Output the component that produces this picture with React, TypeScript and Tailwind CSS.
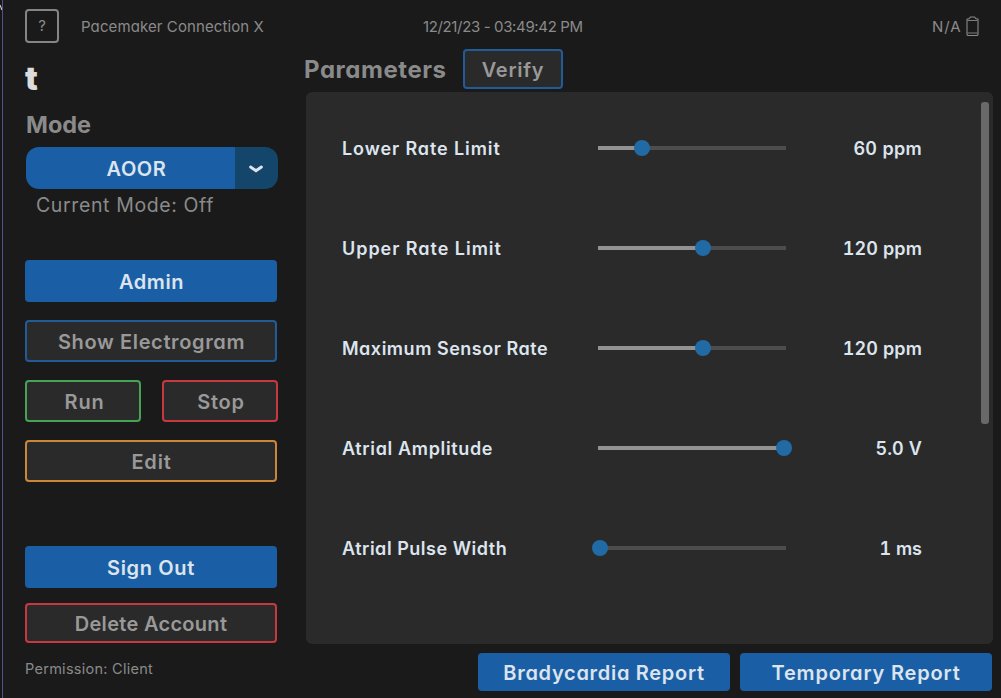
import type { ReactNode } from "react";

type ParameterRow = {
  label: string;
  value: string;
  fill: number;
  labelTracking: string;
  valueTracking: string;
};

const TRACK_WIDTH = 188;

const parameters: ParameterRow[] = [
  { label: "Lower Rate Limit", value: "60 ppm", fill: 44, labelTracking: "tracking-[0.9px]", valueTracking: "tracking-[0.3px]" },
  { label: "Upper Rate Limit", value: "120 ppm", fill: 105, labelTracking: "tracking-[0.97px]", valueTracking: "tracking-[0.1px]" },
  { label: "Maximum Sensor Rate", value: "120 ppm", fill: 105, labelTracking: "tracking-[0.52px]", valueTracking: "tracking-[0.1px]" },
  { label: "Atrial Amplitude", value: "5.0 V", fill: 186, labelTracking: "tracking-[0.65px]", valueTracking: "tracking-[0.1px]" },
  { label: "Atrial Pulse Width", value: "1 ms", fill: 2, labelTracking: "tracking-[0.52px]", valueTracking: "tracking-[0px]" },
];

const tones = {
  solid: "bg-[#1a5fa6] text-[#dce4ee]",
  blue: "border-2 border-[#215c98] bg-[#2a2a2a] text-[#999999]",
  green: "border-2 border-[#44a355] bg-[#2a2a2a] text-[#999999]",
  red: "border-2 border-[#c8393f] bg-[#2a2a2a] text-[#999999]",
  orange: "border-2 border-[#cb8637] bg-[#2a2a2a] text-[#999999]",
};

function Button({ tone, className, children }: { tone: keyof typeof tones; className: string; children: ReactNode }) {
  return (
    <button className={`flex shrink-0 items-center justify-center rounded-[4px] pt-[2px] text-[20px] font-semibold whitespace-nowrap ${tones[tone]} ${className}`}>
      {children}
    </button>
  );
}

function Slider({ fill }: { fill: number }) {
  return (
    <div className="relative h-1 w-[188px] shrink-0 bg-[#4b4d4e]">
      <div className="h-1 bg-[#929292]" style={{ width: fill }} />
      <div
        className="absolute top-1/2 size-4 -translate-x-1/2 -translate-y-1/2 rounded-full bg-[#206ba6]"
        style={{ left: Math.min(fill, TRACK_WIDTH) }}
      />
    </div>
  );
}

function BatteryIcon() {
  return (
    <svg width="13" height="21" viewBox="0 0 13 21" fill="none" stroke="#8a8a8a" className="shrink-0">
      <path d="M1 3.2 L3.2 2.6 L4.5 1 H8.5 L9.8 2.6 L12 3.2 V18.2 Q12 19.5 10.7 19.5 H2.3 Q1 19.5 1 18.2 Z" strokeWidth="1.1" />
      <path d="M1.5 4.5 H11.5 M1.5 17 H11.5" strokeWidth="0.9" />
    </svg>
  );
}

export default function App() {
  return (
    <div className="relative flex h-[698px] w-[1001px] overflow-hidden bg-[#1a1a1a] font-['Inter',sans-serif] text-[#8a8a8a] [font-feature-settings:'cv11']">
      <div className="h-full w-[3px] shrink-0 border-r border-[#55508a] bg-[#15161a]">
        <svg width="2" height="14" viewBox="0 0 2 14" className="block">
          <path d="M0 5 L2 10" stroke="#c8c8b8" strokeWidth="1.2" />
        </svg>
      </div>

      <div className="flex min-w-0 flex-1 flex-col">
        <header className="flex h-[49px] shrink-0 items-start pt-[9px] pl-[22px]">
          <button className="flex size-[34px] items-center justify-center rounded-[4px] border-2 border-[#858585] text-[15px]">?</button>
          <div className="ml-[22px] flex h-[36px] w-[342px] items-center pt-px text-[15px] tracking-[0.1px]">Pacemaker Connection X</div>
          <div className="flex h-[36px] w-[509px] items-center pt-px text-[15px] tracking-[-0.36px]">12/21/23 - 03:49:42 PM</div>
          <div className="flex h-[35px] items-center gap-[5px] text-[15px] tracking-[0.9px]">
            <span className="pt-[2px]">N/A</span>
            <BatteryIcon />
          </div>
        </header>

        <div className="flex flex-1">
          <aside className="flex w-[303px] shrink-0 flex-col pl-[22px]">
            <div className="mt-[10px] h-10 text-[32px] leading-10 font-black text-[#dcdcdc]">t</div>
            <div className="mt-[11px] h-[30px] text-[23.5px] leading-[30px] font-bold pl-px">Mode</div>
            <div className="mt-[7px] ml-px flex h-[42px] w-[252px] overflow-hidden rounded-[13px] text-[#dce4ee]">
              <div className="flex w-[209px] items-center justify-center bg-[#1a5fa6] pt-[2px] pl-[12px] text-[20px] font-semibold tracking-[0.6px]">AOOR</div>
              <div className="flex flex-1 items-center justify-center bg-[#14456b] pr-[2px]">
                <svg width="16" height="10" viewBox="0 0 16 10" fill="none" stroke="#dce4ee" strokeWidth="3" strokeLinecap="round">
                  <path d="M2.6 4 L8 7.7 L13.4 4" />
                </svg>
              </div>
            </div>
            <div className="mt-[4px] ml-[11px] h-6 text-[19.5px] leading-6 tracking-[0.62px] whitespace-nowrap">Current Mode: Off</div>
            <Button tone="solid" className="mt-[43px] h-[42px] w-[252px] pl-px tracking-[0.6px]">Admin</Button>
            <Button tone="blue" className="mt-[18px] h-[42px] w-[252px] pl-px tracking-[0.63px]">Show Electrogram</Button>
            <div className="mt-[18px] flex gap-[21px]">
              <Button tone="green" className="h-[42px] w-[116px] pl-[3px] tracking-[0.8px]">Run</Button>
              <Button tone="red" className="h-[42px] w-[116px] pl-[2px] tracking-[0.8px]">Stop</Button>
            </div>
            <Button tone="orange" className="mt-[18px] h-[42px] w-[252px] pl-px tracking-[0.8px]">Edit</Button>
            <Button tone="solid" className="mt-[64px] h-[42px] w-[252px] tracking-[0.65px]">Sign Out</Button>
            <Button tone="red" className="mt-[15px] h-[40px] w-[252px] tracking-[0.3px]">Delete Account</Button>
            <div className="mt-[16px] h-5 text-[14.5px] leading-5 tracking-[0.27px]">Permission: Client</div>
          </aside>

          <main className="flex w-[687px] shrink-0 flex-col">
            <div className="flex h-[40px] items-center">
              <h2 className="-ml-[2px] w-[159px] pt-[2px] text-[24px] font-bold tracking-[0.55px] whitespace-nowrap">Parameters</h2>
              <Button tone="blue" className="h-[40px] w-[100px] tracking-[0.75px]">Verify</Button>
            </div>
            <section className="mt-[3px] flex h-[552px] rounded-[6px] bg-[#2a2a2a]">
              <div className="flex w-[675px] flex-col pt-[6px]">
                {parameters.map((row) => (
                  <div key={row.label} className="flex h-[100px] items-center pl-[36px] text-[18px] font-semibold text-[#dce4ee]">
                    <div className={`w-[256px] shrink-0 pt-px whitespace-nowrap ${row.labelTracking}`}>{row.label}</div>
                    <Slider fill={row.fill} />
                    <div className={`w-[136px] pt-px text-right whitespace-nowrap [font-feature-settings:'cv11','tnum'] ${row.valueTracking}`}>{row.value}</div>
                  </div>
                ))}
              </div>
              <div className="mt-[10px] h-[322px] w-2 rounded-[3px] bg-[#696969]" />
            </section>
            <div className="mt-[9px] flex justify-end gap-[10px] pr-px">
              <Button tone="solid" className="h-[38px] w-[252px] tracking-[0.7px]">Bradycardia Report</Button>
              <Button tone="solid" className="h-[38px] w-[252px] tracking-[0.83px]">Temporary Report</Button>
            </div>
          </main>
        </div>
      </div>
    </div>
  );
}
